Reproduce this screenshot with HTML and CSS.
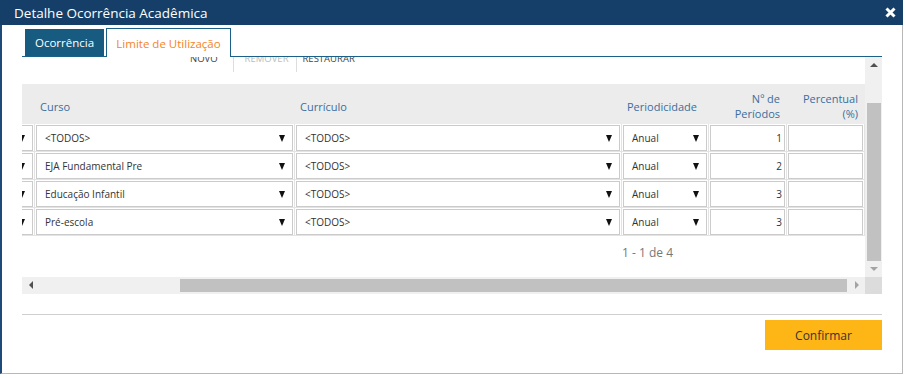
FILE: index.html
```html
<!DOCTYPE html>
<html lang="pt-BR">
<head>
    <meta charset="UTF-8">
    <title>Detalhe Ocorrência Acadêmica</title>
    <link rel="stylesheet" href="styles.css">
</head>
<body>
    <div class="modal">
        <div class="modal-header">
            <span class="modal-title">Detalhe Ocorrência Acadêmica</span>
            <svg class="modal-close" width="11" height="11" viewBox="0 0 11 11">
                <path d="M1.5 1.5 L9.5 9.5 M9.5 1.5 L1.5 9.5" stroke="#fff" stroke-width="3"/>
            </svg>
        </div>
        <div class="modal-body">
            <ul class="tabs">
                <li class="tab">Ocorrência</li>
                <li class="tab active">Limite de Utilização</li>
            </ul>

            <div class="panel">
                <div class="panel-main">
                    <div class="panel-view">
                        <div class="panel-content">
                            <div class="toolbar">
                                <span class="tool tool-new">NOVO</span>
                                <span class="tool tool-remove disabled">REMOVER</span>
                                <span class="tool tool-restore">RESTAURAR</span>
                            </div>

                            <div class="grid">
                                <div class="grid-row grid-head">
                                    <div class="head-cell"></div>
                                    <div class="head-cell">Curso</div>
                                    <div class="head-cell">Currículo</div>
                                    <div class="head-cell">Periodicidade</div>
                                    <div class="head-cell right">Nº de<br>Períodos</div>
                                    <div class="head-cell right">Percentual<br>(%)</div>
                                </div>
                                <div class="grid-row">
                                    <div class="cell"><div class="combo"><span></span><i class="caret"></i></div></div>
                                    <div class="cell"><div class="combo"><span>&lt;TODOS&gt;</span><i class="caret"></i></div></div>
                                    <div class="cell"><div class="combo"><span>&lt;TODOS&gt;</span><i class="caret"></i></div></div>
                                    <div class="cell"><div class="combo"><span>Anual</span><i class="caret"></i></div></div>
                                    <div class="cell"><div class="field">1</div></div>
                                    <div class="cell"><div class="field"></div></div>
                                </div>
                                <div class="grid-row">
                                    <div class="cell"><div class="combo"><span></span><i class="caret"></i></div></div>
                                    <div class="cell"><div class="combo"><span>EJA Fundamental Pre</span><i class="caret"></i></div></div>
                                    <div class="cell"><div class="combo"><span>&lt;TODOS&gt;</span><i class="caret"></i></div></div>
                                    <div class="cell"><div class="combo"><span>Anual</span><i class="caret"></i></div></div>
                                    <div class="cell"><div class="field">2</div></div>
                                    <div class="cell"><div class="field"></div></div>
                                </div>
                                <div class="grid-row">
                                    <div class="cell"><div class="combo"><span></span><i class="caret"></i></div></div>
                                    <div class="cell"><div class="combo"><span>Educação Infantil</span><i class="caret"></i></div></div>
                                    <div class="cell"><div class="combo"><span>&lt;TODOS&gt;</span><i class="caret"></i></div></div>
                                    <div class="cell"><div class="combo"><span>Anual</span><i class="caret"></i></div></div>
                                    <div class="cell"><div class="field">3</div></div>
                                    <div class="cell"><div class="field"></div></div>
                                </div>
                                <div class="grid-row">
                                    <div class="cell"><div class="combo"><span></span><i class="caret"></i></div></div>
                                    <div class="cell"><div class="combo"><span>Pré-escola</span><i class="caret"></i></div></div>
                                    <div class="cell"><div class="combo"><span>&lt;TODOS&gt;</span><i class="caret"></i></div></div>
                                    <div class="cell"><div class="combo"><span>Anual</span><i class="caret"></i></div></div>
                                    <div class="cell"><div class="field">3</div></div>
                                    <div class="cell"><div class="field"></div></div>
                                </div>
                            </div>

                            <div class="pager">1 - 1 de 4</div>
                        </div>
                    </div>
                    <div class="vscroll">
                        <div class="sb-btn"><i class="arrow up"></i></div>
                        <div class="vtrack"><div class="vthumb"></div></div>
                        <div class="sb-btn"><i class="arrow down"></i></div>
                    </div>
                </div>
                <div class="hscroll">
                    <div class="sb-btn"><i class="arrow left"></i></div>
                    <div class="htrack"><div class="hthumb"></div></div>
                    <div class="sb-btn"><i class="arrow right"></i></div>
                    <div class="sb-corner"></div>
                </div>
            </div>

            <div class="footer">
                <button class="btn-confirm">Confirmar</button>
            </div>
        </div>
    </div>
</body>
</html>
```

FILE: styles.css
```css
body {
    margin: 0;
    background: #fff;
    font-family: "Open Sans", Arial, sans-serif;
}
.modal {
    width: 903px;
}
.modal-header {
    height: 25px;
    background: #153f69;
    display: flex;
    align-items: center;
    justify-content: space-between;
    padding: 0 7px 0 14px;
    box-sizing: border-box;
}
.modal-title {
    color: #fff;
    font-size: 13.5px;
}
.modal-close {
    display: block;
}
.modal-body {
    height: 349px;
    box-sizing: border-box;
    border-left: 2px solid #1d4a78;
    border-right: 1px solid #b8b8b8;
    border-bottom: 1px solid #b8b8b8;
    padding: 3px 20px 0 20px;
}
.tabs {
    list-style: none;
    margin: 0;
    padding: 0 0 0 3px;
    display: flex;
    align-items: flex-end;
    gap: 2px;
    height: 28px;
    border-bottom: 1px solid #1b6088;
}
.tab {
    height: 27px;
    width: 79px;
    box-sizing: border-box;
    background: #175b80;
    color: #fff;
    font-size: 11.5px;
    display: flex;
    align-items: center;
    justify-content: center;
}
.tab.active {
    width: 125px;
    height: 29px;
    margin-bottom: -1px;
    background: #fff;
    color: #f5841f;
    border: 1px solid #1b6088;
    border-bottom: none;
}
.panel {
    width: 860px;
}
.panel-main {
    display: flex;
    height: 220px;
}
.panel-view {
    width: 843px;
    overflow: hidden;
}
.panel-content {
    margin-top: -13px;
}
.toolbar {
    display: flex;
    height: 28px;
    padding-left: 168px;
    font-size: 9.5px;
    color: #444;
}
.tool {
    display: flex;
    align-items: center;
}
.tool + .tool {
    border-left: 1px solid #ddd;
}
.tool-new {
    padding-right: 15px;
}
.tool-remove {
    padding: 0 7px 0 11px;
}
.tool-restore {
    padding-left: 6px;
}
.tool.disabled {
    color: #bdbdbd;
}
.grid {
    margin-top: 12px;
    margin-left: -87px;
}
.grid-row {
    display: grid;
    grid-template-columns: 100px 260px 327px 87px 78px 78px;
}
.grid-head {
    height: 40px;
    background: #ececec;
}
.head-cell {
    display: flex;
    align-items: center;
    padding: 4px 0 0 5px;
    font-size: 11px;
    line-height: 15px;
    color: #3a6e9e;
}
.head-cell.right {
    justify-content: flex-end;
    text-align: right;
    padding: 4px 7px 0 0;
}
.cell {
    box-sizing: border-box;
    padding: 1px 1px 0 1px;
    border-right: 1px solid #e3e3e3;
    border-bottom: 1px solid #e3e3e3;
}
.combo, .field {
    height: 26px;
    box-sizing: border-box;
    border: 1px solid #cbcbcb;
    font-size: 10px;
    color: #333;
    display: flex;
    align-items: center;
}
.combo {
    justify-content: space-between;
    padding: 0 7px 0 8px;
}
.field {
    justify-content: flex-end;
    padding-right: 2px;
}
.caret {
    width: 0;
    height: 0;
    border-left: 3px solid transparent;
    border-right: 3px solid transparent;
    border-top: 7px solid #111;
}
.pager {
    margin: 8px 0 0 600px;
    font-size: 12px;
    color: #777;
}
.vscroll {
    width: 17px;
    background: #f0f0f0;
    display: flex;
    flex-direction: column;
}
.sb-btn {
    width: 17px;
    height: 16px;
    display: flex;
    align-items: center;
    justify-content: center;
    flex-shrink: 0;
}
.vtrack {
    flex: 1;
    padding: 30px 1px 0 2px;
}
.vthumb {
    height: 158px;
    background: #c1c1c1;
}
.hscroll {
    display: flex;
    height: 17px;
    background: #f0f0f0;
}
.htrack {
    flex: 1;
    padding: 2px 1px 0 141px;
}
.hthumb {
    height: 13px;
    background: #c1c1c1;
}
.sb-corner {
    width: 17px;
    background: #dcdcdc;
}
.arrow {
    width: 0;
    height: 0;
}
.arrow.up {
    border-left: 4px solid transparent;
    border-right: 4px solid transparent;
    border-bottom: 4px solid #505050;
}
.arrow.down {
    border-left: 4px solid transparent;
    border-right: 4px solid transparent;
    border-top: 4px solid #a3a3a3;
}
.arrow.left {
    border-top: 4px solid transparent;
    border-bottom: 4px solid transparent;
    border-right: 4px solid #505050;
}
.arrow.right {
    border-top: 4px solid transparent;
    border-bottom: 4px solid transparent;
    border-left: 4px solid #a3a3a3;
}
.footer {
    margin-top: 20px;
    border-top: 1px solid #cfcfcf;
    padding-top: 5px;
    display: flex;
    justify-content: flex-end;
}
.btn-confirm {
    width: 117px;
    height: 30px;
    border: none;
    background: #feb516;
    color: #333;
    font-family: "Open Sans", Arial, sans-serif;
    font-size: 12px;
    cursor: pointer;
}
```
